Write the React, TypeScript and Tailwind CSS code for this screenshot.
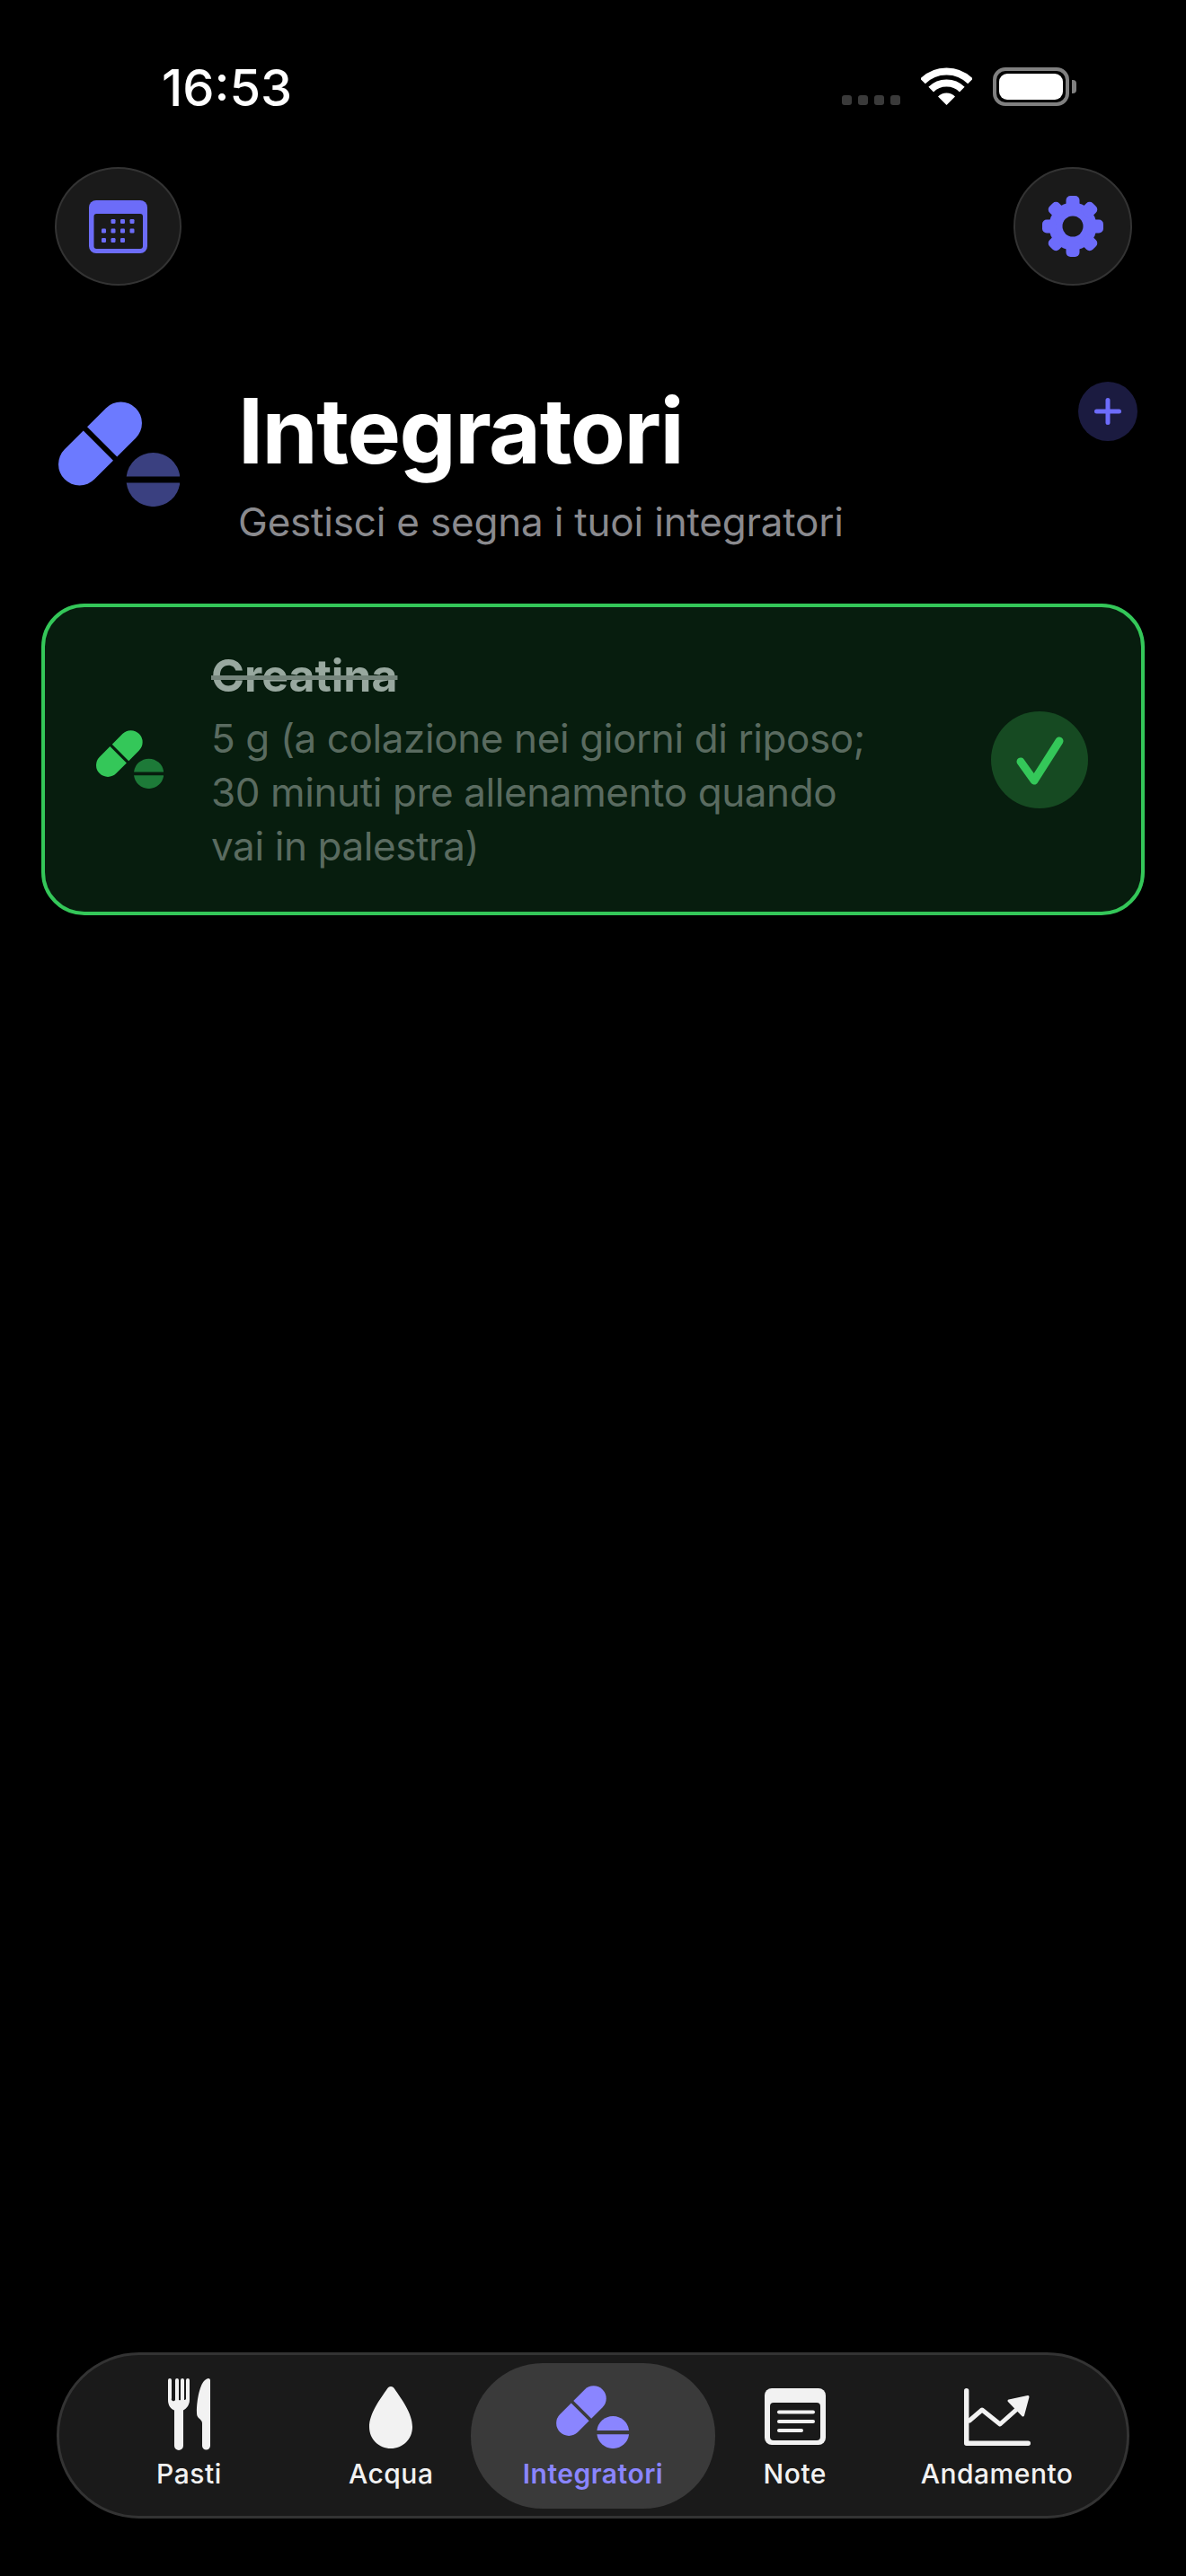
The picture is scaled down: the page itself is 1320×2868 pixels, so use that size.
import type {ReactNode} from "react";

function PillIcon({capsule, tablet, className}: {capsule: string; tablet: string; className: string}) {
    return (
        <svg viewBox="0 0 135 117" className={className}>
            <g transform="translate(46.5 47) rotate(-45)" fill={capsule}>
                <path d="M-3 -23.5H-32.5A23.5 23.5 0 0 0 -32.5 23.5H-3Z"/>
                <path d="M3 -23.5H32.5A23.5 23.5 0 0 1 32.5 23.5H3Z"/>
            </g>
            <g transform="translate(105.5 87)" fill={tablet}>
                <path d="M-29.8 -3.5A30 30 0 0 1 29.8 -3.5Z"/>
                <path d="M-29.8 3.5A30 30 0 0 0 29.8 3.5Z"/>
            </g>
        </svg>
    )
}

function CalendarIcon() {
    const dots = [
        [27, 23.5], [37.5, 23.5], [48, 23.5],
        [16.5, 34], [27, 34], [37.5, 34], [48, 34],
        [16.5, 44.5], [27, 44.5], [37.5, 44.5],
    ];
    return (
        <svg viewBox="0 0 65 59" className="w-[65px] h-[59px]">
            <rect width="65" height="59" rx="8" fill="#6c6cf8"/>
            <rect x="5.5" y="15" width="54.5" height="39" rx="3" fill="#1a1a1a"/>
            {dots.map(([x, y]) => <rect key={`${x}-${y}`} x={x - 2.5} y={y - 2.5} width="5" height="5" rx="1.2" fill="#6c6cf8"/>)}
        </svg>
    )
}

function GearIcon() {
    return (
        <svg viewBox="-34 -34 68 68" className="w-[68px] h-[68px]">
            <circle r="26.5" fill="#6d6cfb"/>
            {[0, 45, 90, 135, 180, 225, 270, 315].map(a => (
                <rect key={a} x="-7.5" y="-34" width="15" height="16" rx="5" fill="#6d6cfb" transform={`rotate(${a})`}/>
            ))}
            <circle r="11.5" fill="#1a1a1a"/>
        </svg>
    )
}

function WifiIcon() {
    return (
        <svg viewBox="0 0 57 42" className="w-[57px] h-[42px]" fill="none" stroke="#fff">
            <path d="M2 15.5A37.5 37.5 0 0 1 55 15.5" strokeWidth="8"/>
            <path d="M11.2 24.7A24.5 24.5 0 0 1 45.8 24.7" strokeWidth="8"/>
            <path d="M28.5 42L19 32.5A13.4 13.4 0 0 1 38 32.5Z" fill="#fff" stroke="none"/>
        </svg>
    )
}

function ForkKnifeIcon() {
    return (
        <svg viewBox="0 0 47 80" className="w-[47px] h-[80px]" fill="#f2f2f2">
            <path d="M0 2a2 2 0 0 1 4 0V22a2 2 0 0 0 4 2V2a2 2 0 0 1 4 0V24a2 2 0 0 0 2 0V2a2 2 0 0 1 4 0V24a2 2 0 0 0 2 -1V2a2 2 0 0 1 4 0V24C24 30 20 34 17 35.500V75a5 5 0 0 1 -10 0V35.500C3 34 0 30 0 24Z"/>
            <path d="M45 0C46.500 0 47 1 47 2.500V75a4.500 4.500 0 0 1 -9 0V50C38 47 36 46 34 44C32.500 42.500 32 41 32 38C32 22 36 6 41 2C42.500 0.800 44 0 45 0Z"/>
        </svg>
    )
}

function DropIcon() {
    return (
        <svg viewBox="0 0 48 69" className="w-[48px] h-[69px] mb-[2px]" fill="#f2f2f2">
            <path d="M24 0C26 0 27 1 28 2.500C36 14 48 30 48 45C48 59 37 69 24 69C11 69 0 59 0 45C0 30 12 14 20 2.500C21 1 22 0 24 0Z"/>
        </svg>
    )
}

function NoteIcon() {
    return (
        <svg viewBox="0 0 68 63" className="w-[68px] h-[63px] mb-[6px]">
            <rect width="68" height="63" rx="8" fill="#f2f2f2"/>
            <rect x="6" y="16" width="56" height="42" rx="4" fill="#1a1a1a"/>
            <g stroke="#f2f2f2" strokeWidth="4" strokeLinecap="round">
                <path d="M16 26.500H54"/>
                <path d="M16 37H54"/>
                <path d="M16 47H41"/>
            </g>
        </svg>
    )
}

function ChartIcon() {
    return (
        <svg viewBox="0 0 74 64" className="w-[74px] h-[64px] mb-[5px]" fill="none" stroke="#f2f2f2" strokeLinecap="round" strokeLinejoin="round">
            <path d="M2.700 2.700V61.300H71.300" strokeWidth="5.400"/>
            <path d="M6 36L20 24L40 40L58 24" strokeWidth="5"/>
            <path d="M71 9.500L50 14L65.500 30Z" fill="#f2f2f2" strokeWidth="3"/>
        </svg>
    )
}

function NavItem({icon, label, active}: {icon: ReactNode; label: string; active?: boolean}) {
    return (
        <div className="relative flex flex-col items-center">
            {active && <div className="absolute -left-[24px] -right-[24px] top-[9px] h-[162px] rounded-[80px] bg-[#3a3a3a]"/>}
            <div className="relative h-[80px] mt-[26px] flex items-end justify-center">{icon}</div>
            <span className={`relative mt-[8px] text-[30px] leading-[36px] tracking-[0.5px] ${active ? "font-semibold text-[#8a85ff]" : "font-medium text-[#f2f2f2]"}`}>{label}</span>
        </div>
    )
}

function App() {
    return (
        <div className="w-[1320px] h-[2868px] bg-black flex flex-col font-['Inter',sans-serif] overflow-hidden">
            {/* status bar */}
            <div className="h-[118px] pt-[77px] pl-[180px] flex items-start">
                <span className="text-[56px] leading-[42px] font-medium text-white">16:53</span>
                <div className="ml-auto flex items-start mr-[122px]">
                    <div className="flex gap-[7px] mt-[29px]">
                        <div className="w-[11px] h-[11px] rounded-[3px] bg-[#3a3a3a]"/>
                        <div className="w-[11px] h-[11px] rounded-[3px] bg-[#3a3a3a]"/>
                        <div className="w-[11px] h-[11px] rounded-[3px] bg-[#3a3a3a]"/>
                        <div className="w-[11px] h-[11px] rounded-[3px] bg-[#3a3a3a]"/>
                    </div>
                    <div className="ml-[23px] -mt-[2px]"><WifiIcon/></div>
                    <div className="ml-[23px] -mt-[2px] w-[85px] h-[43px] rounded-[14px] border-[4px] border-[#808080] p-[3px]">
                        <div className="w-full h-full rounded-[9px] bg-white"/>
                    </div>
                    <div className="ml-[3px] mt-[12px] w-[5px] h-[15px] rounded-r-[4px] bg-[#808080]"/>
                </div>
            </div>

            {/* top buttons */}
            <div className="mt-[68px] pl-[61px] pr-[60px] flex justify-between">
                <div className="w-[141px] h-[132px] rounded-[50%] bg-[#1a1a1a] border-[2px] border-[#333] flex items-center justify-center">
                    <CalendarIcon/>
                </div>
                <div className="w-[132px] h-[132px] rounded-full bg-[#1a1a1a] border-[2px] border-[#333] flex items-center justify-center">
                    <GearIcon/>
                </div>
            </div>

            {/* header */}
            <div className="mt-[107px] pl-[65px] pr-[54px] flex items-start">
                <PillIcon capsule="#6c7aff" tablet="#3a4080" className="w-[135px] h-[117px] mt-[22px] shrink-0"/>
                <div className="ml-[65px]">
                    <h1 className="text-[100px] leading-[110px] font-bold tracking-[-1.5px] text-white">Integratori</h1>
                    <p className="mt-[19px] text-[44px] leading-[54px] tracking-[-0.2px] text-[#8a8a8e]">Gestisci e segna i tuoi integratori</p>
                </div>
                <div className="ml-auto w-[66px] h-[66px] rounded-full bg-[#1b1b40] flex items-center justify-center">
                    <svg viewBox="0 0 30 30" className="w-[30px] h-[30px]" stroke="#6d6cfb" strokeWidth="5" strokeLinecap="round">
                        <path d="M15 2.500V27.500M2.500 15H27.500"/>
                    </svg>
                </div>
            </div>

            {/* card */}
            <div className="mt-[64px] mx-[46px] h-[347px] rounded-[48px] border-[4px] border-[#34c759] bg-[#071d0e] pl-[57px] pr-[59px] flex items-center">
                <PillIcon capsule="#34c759" tablet="#1d7a38" className="w-[75px] h-[65px] shrink-0"/>
                <div className="ml-[53px] w-[760px] mt-[3px]">
                    <p className="text-[50px] leading-[58px] font-bold text-[#98a89f] line-through decoration-[#75857c]">Creatina</p>
                    <p className="mt-[11px] text-[44px] leading-[60px] tracking-[-0.4px] text-[#5a6b60]">5 g (a colazione nei giorni di riposo; 30 minuti pre allenamento quando vai in palestra)</p>
                </div>
                <div className="ml-auto w-[108px] h-[108px] rounded-full bg-[#164a22] flex items-center justify-center">
                    <svg viewBox="0 0 108 108" className="w-[108px] h-[108px]" fill="none" stroke="#34c759" strokeWidth="9" strokeLinecap="round" strokeLinejoin="round">
                        <path d="M33 56L48 77L76 33"/>
                    </svg>
                </div>
            </div>

            {/* bottom nav */}
            <div className="mt-auto mb-[64px] mx-[63px] h-[185px] rounded-[92px] bg-[#1a1a1a] border-[3px] border-[#333] px-[32px] grid grid-cols-5">
                <NavItem icon={<ForkKnifeIcon/>} label="Pasti"/>
                <NavItem icon={<DropIcon/>} label="Acqua"/>
                <NavItem icon={<PillIcon capsule="#8a85ff" tablet="#8a85ff" className="w-[81px] h-[70px] mb-[2px]"/>} label="Integratori" active/>
                <NavItem icon={<NoteIcon/>} label="Note"/>
                <NavItem icon={<ChartIcon/>} label="Andamento"/>
            </div>
        </div>
    )
}

export default App;
